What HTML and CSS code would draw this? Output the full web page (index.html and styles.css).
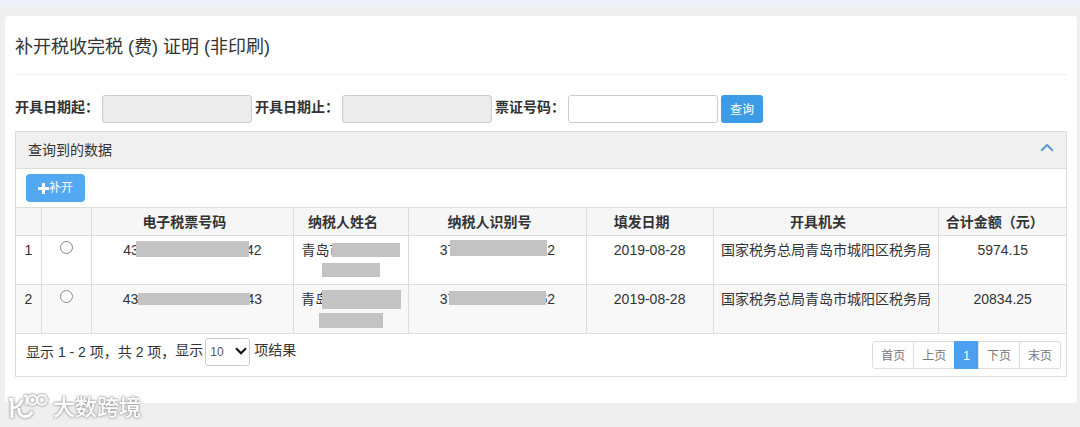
FILE: index.html
```html
<!DOCTYPE html>
<html lang="zh-CN">
<head>
<meta charset="utf-8">
<title>补开税收完税 (费) 证明 (非印刷)</title>
<link rel="stylesheet" href="styles.css">
</head>
<body>
<div class="topbar"></div>
<main class="card">
  <h1 class="title">补开税收完税 (费) 证明 (非印刷)</h1>
  <form class="search">
    <label for="date-from">开具日期起：</label>
    <input id="date-from" class="field" type="text" disabled>
    <label for="date-to">开具日期止：</label>
    <input id="date-to" class="field" type="text" disabled>
    <label for="ticket">票证号码：</label>
    <input id="ticket" class="field" type="text">
    <button class="btn btn-search" type="button">查询</button>
  </form>
  <section class="panel">
    <header class="panel-head">
      <h2>查询到的数据</h2>
      <button class="collapse" type="button" aria-label="收起">
        <svg width="14" height="10" viewBox="0 0 14 10"><path d="M1.200 7.800 7 2l5.800 5.800" fill="none" stroke="#5b9bd5" stroke-width="2"/></svg>
      </button>
    </header>
    <div class="toolbar">
      <button class="btn btn-add" type="button">
        <svg width="11" height="11" viewBox="0 0 11 11"><path d="M4 0h3v4h4v3H7v4H4V7H0V4h4z" fill="#fff"/></svg>补开
      </button>
    </div>
    <table class="grid">
      <colgroup>
        <col class="c-no"><col class="c-pick"><col class="c-ticket"><col class="c-name"><col class="c-id"><col class="c-date"><col class="c-office"><col class="c-sum">
      </colgroup>
      <thead>
        <tr><th></th><th></th><th>电子税票号码</th><th>纳税人姓名</th><th>纳税人识别号</th><th>填发日期</th><th>开具机关</th><th>合计金额（元）</th></tr>
      </thead>
      <tbody>
        <tr>
          <td>1</td>
          <td><input class="pick" type="radio" name="row" aria-label="第 1 项"></td>
          <td><div class="line">43<span class="mask ticket-a"></span>42</div></td>
          <td><div class="line">青岛市<span class="mask name-a"></span></div><div class="line"><span class="mask name-b"></span></div></td>
          <td><div class="line">37<span class="mask id-a"></span>2</div></td>
          <td>2019-08-28</td>
          <td>国家税务总局青岛市城阳区税务局</td>
          <td>5974.15</td>
        </tr>
        <tr>
          <td>2</td>
          <td><input class="pick" type="radio" name="row" aria-label="第 2 项"></td>
          <td><div class="line">43<span class="mask ticket-b"></span>43</div></td>
          <td><div class="line">青岛市<span class="mask name-c"></span></div><div class="line"><span class="mask name-d"></span></div></td>
          <td><div class="line">37<span class="mask id-b"></span>62</div></td>
          <td>2019-08-28</td>
          <td>国家税务总局青岛市城阳区税务局</td>
          <td>20834.25</td>
        </tr>
      </tbody>
    </table>
    <footer class="panel-foot">
      <div class="info">
        <span>显示 1 - 2 项，共 2 项，</span>
        <label class="length" for="size">显示</label>
        <span class="size">
          <select id="size"><option>10</option><option>25</option><option>50</option></select>
          <svg width="12" height="8" viewBox="0 0 12 8"><path d="M1 1.200l5 5 5-5" fill="none" stroke="#111" stroke-width="2.200"/></svg>
        </span>
        <span class="length">项结果</span>
      </div>
      <nav class="pages">
        <a href="#">首页</a><a href="#">上页</a><a href="#" class="on">1</a><a href="#">下页</a><a href="#">末页</a>
      </nav>
    </footer>
  </section>
</main>
<div class="watermark">
  <svg width="40" height="28" viewBox="0 0 40 28" fill="none" stroke="#fff">
    <path d="M0 5.500h3V24M13 5.500C12 10 9 13 4 14" stroke-width="3"/>
    <path d="M10 14c-1 6 3 9 7 8.500 3-.5 5-2 6-5" stroke-width="3"/>
    <path d="M15 2h2.500v9" stroke-width="2"/>
    <circle cx="23.500" cy="6" r="4.800" stroke-width="2"/>
    <circle cx="33" cy="6" r="4.800" stroke-width="2"/>
  </svg>
  <span>大数跨境</span>
</div>
</body>
</html>
```

FILE: styles.css
```css
* { box-sizing: border-box; }

body {
  margin: 0;
  min-height: 100vh;
  position: relative;
  background: #efefef;
  color: #333;
  font: 14px/20px "Liberation Sans", "Noto Sans CJK SC", sans-serif;
}

button, input, select { font-family: inherit; margin: 0; }

.topbar { height: 6px; background: #eef1f7; }

.card {
  margin: 10px 3px 25px 5px;
  padding: 18px 10px 26px;
  background: #fff;
  border-radius: 4px;
}

.title {
  margin: 0 0 20px;
  padding-bottom: 14px;
  border-bottom: 1px solid #eee;
  font-size: 18px;
  font-weight: 400;
  line-height: 26px;
}

.search { display: flex; align-items: center; gap: 3px; margin-bottom: 8px; }
.search label { font-weight: 700; padding-bottom: 4px; white-space: nowrap; }

.field {
  width: 150px;
  height: 28px;
  padding: 4px 8px;
  border: 1px solid #ccc;
  border-radius: 3px;
  background: #fff;
}
.field:disabled { background: #ececec; }

.btn {
  height: 28px;
  border: 0;
  border-radius: 3px;
  color: #fff;
  font-size: 12px;
  line-height: 20px;
}
.btn-search { padding: 2px 8px 0; background: #3d9be6; width: 42px; }
.btn-add {
  display: flex;
  align-items: center;
  padding: 0 12px;
  border-radius: 4px;
  background: #53a8f2;
}

.panel { border: 1px solid #ddd; }

.panel-head {
  display: flex;
  justify-content: space-between;
  align-items: center;
  height: 37px;
  padding: 0 12px;
  background: #f0f0f0;
  border-bottom: 1px solid #ddd;
}
.panel-head h2 { margin: 0; font-size: 14px; font-weight: 400; }
.collapse { display: flex; padding: 0 0 4px; border: 0; background: none; }

.toolbar { padding: 5px 10px; }

.grid { width: 100%; table-layout: fixed; border-collapse: collapse; }
.c-no { width: 2.4%; }
.c-pick { width: 4.8%; }
.c-ticket { width: 19.2%; }
.c-name { width: 11%; }
.c-id { width: 16.9%; }
.c-date { width: 12.1%; }
.c-office { width: 21.5%; }
.c-sum { width: 12.1%; }

.grid th, .grid td {
  padding: 4px 0;
  border: 1px solid #ddd;
  text-align: center;
  vertical-align: top;
  white-space: nowrap;
}
.grid th:first-child, .grid td:first-child { border-left: 0; }
.grid th:last-child, .grid td:last-child { border-right: 0; }
.grid th { padding: 4px 16px 3px 0; background: #f6f6f6; }
.grid td { height: 49px; }
.grid tbody tr:nth-child(even) { background: #f8f8f8; }

.pick {
  appearance: none;
  display: block;
  width: 13px;
  height: 13px;
  margin: 1px auto 0;
  border: 1px solid #888;
  border-radius: 50%;
  background: #fff;
}

.line { display: flex; justify-content: center; align-items: center; height: 20px; }
.mask { position: relative; flex: none; height: 14px; background: #c3c3c3; }
.ticket-a { width: 113px; height: 16px; margin: 0 -3px 3px; }
.ticket-b { width: 112px; height: 12px; margin-right: -4px; }
.name-a { width: 68px; margin-left: -11px; }
.name-b { width: 58px; }
.name-c { width: 79px; height: 19px; margin-left: -21px; }
.name-d { width: 64px; height: 15px; margin-top: 3px; }
.id-a { width: 97px; height: 16px; margin-left: -5px; margin-bottom: 4px; }
.id-b { width: 97px; margin: 0 -7px 3px -6px; }

.panel-foot {
  display: flex;
  justify-content: space-between;
  align-items: flex-start;
  padding: 4px 5px 7px 10px;
}
.info { display: flex; align-items: center; }
.length { padding-bottom: 4px; }
.size { position: relative; margin: 0 4px 0 2px; }
.size select {
  appearance: none;
  display: block;
  width: 45px;
  height: 28px;
  padding: 0 4px;
  border: 1px solid #ccc;
  border-radius: 3px;
  background: #fff;
  color: #555;
  font-size: 12px;
}
.size svg { position: absolute; right: 3px; top: 9px; pointer-events: none; }

.pages { display: flex; margin-top: 3px; }
.pages a {
  padding: 4px 8px 2px;
  margin-left: -1px;
  border: 1px solid #ddd;
  color: #777;
  font-size: 12px;
  text-decoration: none;
}
.pages a:first-child { border-radius: 3px 0 0 3px; }
.pages a:last-child { border-radius: 0 3px 3px 0; }
.pages .on { background: #4d9ff0; border-color: #4d9ff0; color: #fff; }

.watermark {
  position: absolute;
  left: 9px;
  bottom: 5px;
  display: flex;
  align-items: center;
  gap: 4px;
  color: #fff;
  font-size: 22px;
  font-weight: 500;
  line-height: 30px;
  filter: drop-shadow(0 0 1px #999) drop-shadow(0 0 1px #bbb);
}
```
